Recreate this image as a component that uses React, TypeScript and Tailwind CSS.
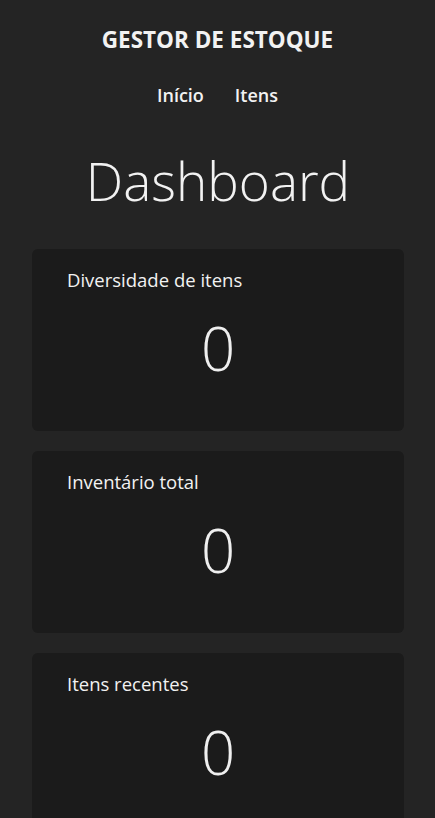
import React from 'react';

const stats = [
  { label: 'Diversidade de itens', value: 0 },
  { label: 'Inventário total', value: 0 },
  { label: 'Itens recentes', value: 0 },
];

const StatCard = ({ label, value }: { label: string; value: number }) => (
  <div className="bg-[#1b1b1b] rounded-md h-[182px] px-[35px] pt-[18px]">
    <h3 className="text-[18.5px] leading-[26px] text-[#f2f2f2]">{label}</h3>
    <p className="text-center text-[60px] leading-[80px] font-light text-[#efefef] mt-[15px]">{value}</p>
  </div>
);

export default function App() {
  return (
    <div
      className="min-h-screen bg-[#242424] text-[#f2f2f2]"
      style={{ fontFamily: '"Open Sans", "Noto Sans", sans-serif' }}
    >
      <header className="flex flex-col items-center pt-[24px]">
        <h1 className="text-[22.5px] leading-[32px] font-bold">GESTOR DE ESTOQUE</h1>
        <nav className="flex gap-[31px] mt-[26px]">
          <a className="text-[18px] leading-[26px] font-semibold">Início</a>
          <a className="text-[18px] leading-[26px] font-semibold">Itens</a>
        </nav>
      </header>
      <main className="pl-[32px] pr-[31px] pb-10">
        <h2 className="text-center text-[53px] leading-[80px] font-light mt-[33px] mb-[28px]">Dashboard</h2>
        <div className="flex flex-col gap-[20px]">
          {stats.map((s) => (
            <StatCard key={s.label} label={s.label} value={s.value} />
          ))}
        </div>
      </main>
    </div>
  );
}
